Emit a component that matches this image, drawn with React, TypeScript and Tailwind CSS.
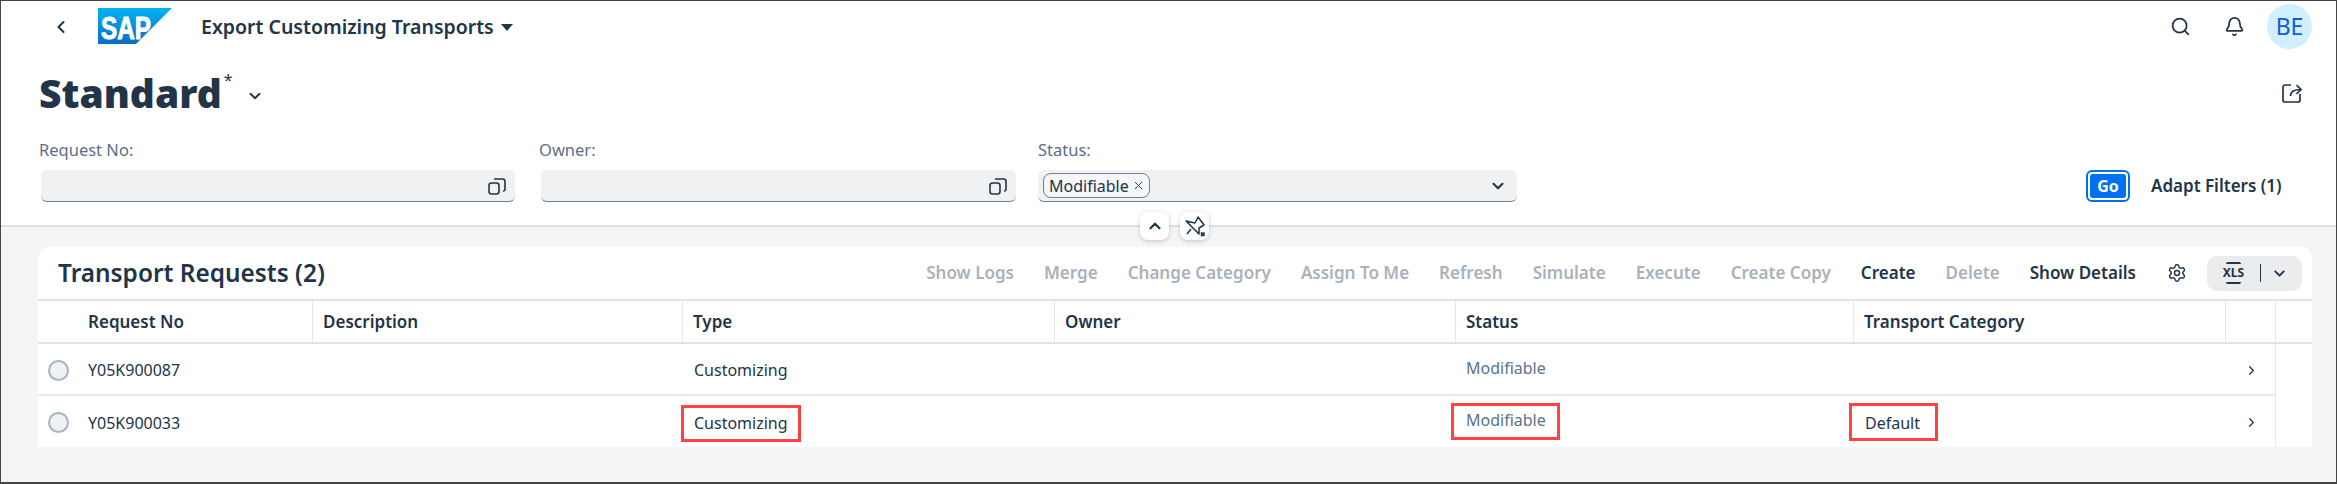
import { Bell, ChevronDown, ChevronLeft, ChevronRight, ChevronUp, Search, Settings, X } from "lucide-react"

const font = "[font-family:'Noto_Sans','Liberation_Sans',sans-serif]"

const toolbarActions = [
  { label: "Show Logs", enabled: false },
  { label: "Merge", enabled: false },
  { label: "Change Category", enabled: false },
  { label: "Assign To Me", enabled: false },
  { label: "Refresh", enabled: false },
  { label: "Simulate", enabled: false },
  { label: "Execute", enabled: false },
  { label: "Create Copy", enabled: false },
  { label: "Create", enabled: true },
  { label: "Delete", enabled: false },
  { label: "Show Details", enabled: true },
]

const columns = "grid grid-cols-[275px_370px_372px_401px_398px_372px_50px_36px]"

function ValueHelpIcon() {
  return (
    <svg width="18" height="18" viewBox="0 0 18 18" fill="none" stroke="#223548" strokeWidth="1.6">
      <rect x="1" y="6" width="10" height="11" rx="2.5" />
      <path d="M6 2h8.5a2.5 2.5 0 0 1 2.5 2.5V12a2 2 0 0 1-2 2" />
    </svg>
  )
}

function ShareIcon() {
  return (
    <svg width="20" height="20" viewBox="0 0 20 20" fill="none" stroke="#223548" strokeWidth="1.7">
      <path d="M9 2H3a2 2 0 0 0-2 2v13a2 2 0 0 0 2 2h13a2 2 0 0 0 2-2v-6" />
      <path d="M8.5 13c0-4.5 3-6.5 10-6.5M14.5 2l4.5 4.5-4.5 4.5" />
    </svg>
  )
}

function PinOffIcon() {
  return (
    <svg width="29" height="28" viewBox="0 0 29 28" fill="none" stroke="#223548" strokeWidth="1.5" strokeLinejoin="round">
      <path d="M6 9l9 2 3-6 6 8-5 3v6zM11 17l-4 5" />
      <path d="M21 20.5l3.5 3.5m0-3.5L21 24" strokeWidth="1.8" />
    </svg>
  )
}

function SapLogo() {
  return (
    <svg width="74" height="36" viewBox="0 0 74 36">
      <defs>
        <linearGradient id="sap" x1="0" y1="0" x2="0" y2="1">
          <stop offset="0" stopColor="#00b4f0" />
          <stop offset="1" stopColor="#0a6cc8" />
        </linearGradient>
      </defs>
      <polygon points="0,0 74,0 38,36 0,36" fill="url(#sap)" />
      <text
        x="3"
        y="31"
        fill="#ffffff"
        stroke="#ffffff"
        strokeWidth="1"
        fontFamily="Liberation Sans"
        fontWeight="700"
        fontSize="32"
        textLength="50"
        lengthAdjust="spacingAndGlyphs"
      >
        SAP
      </text>
    </svg>
  )
}

function RedBox({ className }: { className: string }) {
  return <div className={`absolute border-[3px] border-[#ff4343] ${className}`} />
}

function FilterField({ label, width, children }: { label: string; width: string; children: React.ReactNode }) {
  return (
    <div className={`flex flex-col ${width}`}>
      <span className="h-[31px] text-[16.5px] leading-[22px] text-[#5b6f85]">{label}</span>
      <div className="flex h-8 items-center justify-between rounded-md border-b border-[#6b7f95] bg-[#eff1f2] pl-[5px] pr-[9px]">
        {children}
      </div>
    </div>
  )
}

export default function App() {
  return (
    <div className={`relative flex h-[484px] w-[2337px] flex-col overflow-hidden border border-b-2 border-[#444444] bg-[#f4f5f7] text-[#223548] ${font}`}>
      {/* Shell bar */}
      <header className="bg-white">
        <div className="flex h-[51px] items-center pl-[50px] pr-[24px]">
          <ChevronLeft className="h-[20px] w-[20px]" strokeWidth={2.5} />
          <div className="ml-[27px] mb-[2px]">
            <SapLogo />
          </div>
          <span className="ml-[29px] text-[19.5px] font-semibold">Export Customizing Transports</span>
          <span className="ml-[7px] mt-[2px] h-0 w-0 border-x-[6px] border-t-[7px] border-x-transparent border-t-[#223548]" />
          <div className="ml-auto flex items-center">
            <Search className="h-[21px] w-[21px]" strokeWidth={2} />
            <Bell className="ml-[33px] h-[21px] w-[21px]" strokeWidth={2} />
            <div className="ml-[22px] flex h-[45px] w-[45px] items-center justify-center rounded-full bg-[#d1efff] text-[23px] text-[#0a5fdc]">
              BE
            </div>
          </div>
        </div>

        {/* Variant title */}
        <div className="flex h-[67px] items-center pl-[38px] pr-[34px] pt-[14px]">
          <h1 className="text-[39px] leading-none font-black">Standard</h1>
          <span className="mb-[26px] ml-[2px] text-[16px] leading-none">*</span>
          <ChevronDown className="ml-[13px] mt-[6px] h-[18px] w-[18px]" strokeWidth={2.5} />
          <div className="ml-auto">
            <ShareIcon />
          </div>
        </div>

        {/* Filter bar */}
        <div className="relative flex h-[108px] items-start border-b-2 border-[#dcdfe2] pl-[38px] pt-[20px]">
          <FilterField label="Request No:" width="w-[476px] [&>div]:ml-[2px]">
            <span />
            <ValueHelpIcon />
          </FilterField>
          <div className="ml-[24px]">
            <FilterField label="Owner:" width="w-[477px] [&>div]:ml-[2px]">
              <span />
              <ValueHelpIcon />
            </FilterField>
          </div>
          <div className="ml-[22px]">
            <FilterField label="Status:" width="w-[479px]">
              <span className="flex h-[25px] items-center gap-[3px] rounded-lg border border-[#6b7f95] bg-[#f5f6f7] pl-[5px] pr-[4px] text-[16px]">
                Modifiable
                <X className="h-[13px] w-[13px]" strokeWidth={1.75} />
              </span>
              <ChevronDown className="mr-[1px] h-[18px] w-[18px]" strokeWidth={2.75} />
            </FilterField>
          </div>
          <div className="mt-[31px] ml-[569px] flex h-8 w-[44px] items-center justify-center rounded-md border-2 border-[#0070f2] bg-white p-[2px]">
            <span className="flex h-full w-full items-center justify-center rounded-[3px] bg-[#0070f2] text-[16px] font-bold text-white">
              Go
            </span>
          </div>
          <span className="mt-[31px] ml-[21px] text-[17px] leading-8 font-semibold">Adapt Filters (1)</span>

          {/* Header toggle buttons sit on the divider */}
          <div className="absolute left-[1139px] top-[93px] flex gap-[11px]">
            <div className="flex h-[28px] w-[29px] items-center justify-center rounded-lg bg-white shadow-[0_1px_4px_rgba(34,53,72,0.25)]">
              <ChevronUp className="h-[18px] w-[18px]" strokeWidth={3} />
            </div>
            <div className="flex h-[28px] w-[29px] items-center justify-center rounded-lg bg-white shadow-[0_1px_4px_rgba(34,53,72,0.25)]">
              <PinOffIcon />
            </div>
          </div>
        </div>
      </header>

      {/* Transport table card */}
      <section className="relative mx-[37px] mt-[20px] w-[2274px] overflow-hidden rounded-t-xl bg-white">
        <div className="flex h-[54px] items-center border-b-2 border-[#e1e3e5] pl-[20px] pr-[10px]">
          <h2 className="text-[24.4px] font-semibold">Transport Requests (2)</h2>
          <div className="ml-auto flex items-center gap-[30px] text-[17.05px] font-semibold">
            {toolbarActions.map((action) => (
              <span key={action.label} className={action.enabled ? "text-[#223548]" : "text-[#a8b2bc]"}>
                {action.label}
              </span>
            ))}
          </div>
          <Settings className="ml-[31px] h-[20px] w-[20px]" strokeWidth={1.75} />
          <div className="ml-[20px] flex h-[35px] w-[95px] items-center rounded-[10px] bg-[#eaecee] pl-[17px]">
            <div className="flex h-[22px] w-[19px] flex-col items-center justify-between text-[12px] leading-none font-bold">
              <span className="h-[2px] w-[15px] rounded-t-sm bg-[#223548]" />
              XLS
              <span className="h-[2px] w-[15px] rounded-b-sm bg-[#223548]" />
            </div>
            <span className="ml-[17px] h-[18px] w-px bg-[#223548]" />
            <ChevronDown className="ml-[10px] h-[17px] w-[17px]" strokeWidth={2.75} />
          </div>
        </div>

        <div className={`${columns} h-[43px] items-center border-b-2 border-[#e1e3e5] text-[17px] font-semibold`}>
          <div className="flex h-full items-center border-r border-[#e5e7e9] pl-[50px]">Request No</div>
          <div className="flex h-full items-center border-r border-[#e5e7e9] pl-[10px]">Description</div>
          <div className="flex h-full items-center border-r border-[#e5e7e9] pl-[10px]">Type</div>
          <div className="flex h-full items-center border-r border-[#e5e7e9] pl-[10px]">Owner</div>
          <div className="flex h-full items-center border-r border-[#e5e7e9] pl-[10px]">Status</div>
          <div className="flex h-full items-center border-r border-[#e5e7e9] pl-[10px]">Transport Category</div>
          <div className="h-full border-r border-[#e5e7e9]" />
          <div />
        </div>

        {[
          { id: "Y05K900087", category: "" },
          { id: "Y05K900033", category: "Default" },
        ].map((row, index) => (
          <div key={row.id} className={`${columns} ${index === 0 ? "h-[52px]" : "h-[51px]"} items-center text-[16px]`}>
            <div className={`flex h-full items-center pl-[10px] pt-[2px] ${index === 0 ? "border-b-2 border-[#e6e8ea]" : ""}`}>
              <span className="h-[21px] w-[21px] rounded-full border-2 border-[#a5b2c2] bg-[#eff1f2]" />
              <span className="ml-[19px]">{row.id}</span>
            </div>
            <div className={`h-full ${index === 0 ? "border-b-2 border-[#e6e8ea]" : ""}`} />
            <div className={`flex h-full items-center pl-[11px] pt-[2px] ${index === 0 ? "border-b-2 border-[#e6e8ea]" : ""}`}>Customizing</div>
            <div className={`h-full ${index === 0 ? "border-b-2 border-[#e6e8ea]" : ""}`} />
            <div className={`flex h-full items-center pb-[3px] pl-[10px] text-[#5b738b] ${index === 0 ? "border-b-2 border-[#e6e8ea]" : ""}`}>
              Modifiable
            </div>
            <div className={`flex h-full items-center pl-[11px] pt-[2px] ${index === 0 ? "border-b-2 border-[#e6e8ea]" : ""}`}>{row.category}</div>
            <div className={`flex h-full items-center justify-end border-r border-[#e5e7e9] pr-[16px] pt-[2px] ${index === 0 ? "border-b-2 border-b-[#e6e8ea]" : ""}`}>
              <ChevronRight className="h-[15px] w-[15px]" strokeWidth={2} />
            </div>
            <div />
          </div>
        ))}

        {/* Annotation boxes from the documentation screenshot */}
        <RedBox className="left-[643px] top-[158px] h-[37px] w-[120px]" />
        <RedBox className="left-[1413px] top-[156px] h-[37px] w-[109px]" />
        <RedBox className="left-[1811px] top-[156px] h-[38px] w-[89px]" />
      </section>
    </div>
  )
}
